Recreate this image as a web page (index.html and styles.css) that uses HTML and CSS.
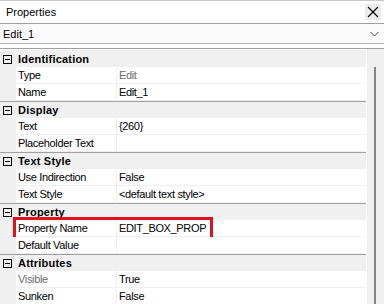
FILE: index.html
```html
<!DOCTYPE html>
<html lang="en">
<head>
<meta charset="UTF-8">
<title>Properties</title>
<link rel="stylesheet" href="styles.css">
</head>
<body>
<div class="panel">
  <div class="titlebar">
    <span class="title">Properties</span>
    <span class="close">
      <svg width="12" height="12" viewBox="0 0 12 12"><path d="M1 1L11 11M11 1L1 11" stroke="#000" stroke-width="1.1" fill="none"/></svg>
    </span>
  </div>

  <div class="combo">
    <span>Edit_1</span>
    <svg class="chevron" width="9" height="6" viewBox="0 0 9 6"><path d="M0.5 1L4.5 5L8.5 1" stroke="#555" stroke-width="1" fill="none"/></svg>
  </div>

  <div class="body">
    <div class="grid">
      <div class="cat first"><span class="toggle"></span>Identification</div>
      <div class="prop"><span class="name">Type</span><span class="value dim">Edit</span></div>
      <div class="prop"><span class="name">Name</span><span class="value">Edit_1</span></div>

      <div class="cat"><span class="toggle"></span>Display</div>
      <div class="prop"><span class="name">Text</span><span class="value">{260}</span></div>
      <div class="prop"><span class="name">Placeholder Text</span><span class="value"></span></div>

      <div class="cat"><span class="toggle"></span>Text Style</div>
      <div class="prop"><span class="name">Use Indirection</span><span class="value">False</span></div>
      <div class="prop"><span class="name">Text Style</span><span class="value">&lt;default text style&gt;</span></div>

      <div class="cat"><span class="toggle"></span>Property</div>
      <div class="prop marked"><span class="name">Property Name</span><span class="value">EDIT_BOX_PROP</span><span class="highlight"></span></div>
      <div class="prop"><span class="name">Default Value</span><span class="value"></span></div>

      <div class="cat"><span class="toggle"></span>Attributes</div>
      <div class="prop"><span class="name dim">Visible</span><span class="value">True</span></div>
      <div class="prop"><span class="name">Sunken</span><span class="value">False</span></div>
    </div>
    <div class="scrollbar"><div class="thumb"></div></div>
  </div>
</div>
</body>
</html>
```

FILE: styles.css
```css
body {
  margin: 0;
  background: #fff;
  color: #000;
  font-family: 'Liberation Sans', Arial, sans-serif;
  font-size: 11px;
  overflow: hidden;
}

.panel {
  width: 384px;
  height: 304px;
  display: flex;
  flex-direction: column;
  overflow: hidden;
}

.titlebar {
  height: 22px;
  border-top: 1px solid #c8c8c8;
  border-bottom: 1px solid #a0a0a0;
  display: flex;
  align-items: center;
  justify-content: space-between;
  padding-left: 6px;
}

.close {
  width: 16px;
  height: 16px;
  margin-right: 3px;
  background: #ececec;
  display: flex;
  align-items: center;
  justify-content: center;
}

.combo {
  height: 19px;
  background: #fbfbfb;
  border-bottom: 1px solid #b4b4b4;
  display: flex;
  align-items: center;
  justify-content: space-between;
  padding-left: 3px;
  padding-right: 5px;
}

.chevron {
  margin-top: 1px;
}

.body {
  margin-top: 4px;
  border-top: 1px solid #a0a0a0;
  flex: 1;
  display: flex;
  min-height: 0;
}

.grid {
  width: 366px;
  padding-top: 1px;
  border-right: 1px solid #fff;
}

.cat {
  height: 16px;
  border-top: 1px solid #a0a0a0;
  background: #f0f0f0;
  display: flex;
  align-items: center;
  font-weight: bold;
  letter-spacing: 0.2px;
}

.cat.first {
  border-top-color: #f0f0f0;
}

.toggle {
  width: 9px;
  height: 9px;
  box-sizing: border-box;
  border: 1px solid #000;
  margin: 0 6px 0 3px;
  position: relative;
}

.toggle::after {
  content: "";
  position: absolute;
  left: 1px;
  right: 1px;
  top: 3px;
  height: 1px;
  background: #000;
}

.prop {
  height: 16px;
  border-bottom: 1px solid #f0f0f0;
  display: flex;
  padding-left: 16px;
  background: #f0f0f0;
  position: relative;
  letter-spacing: -0.35px;
  line-height: 16px;
}

.name {
  width: 98px;
  padding-left: 2px;
  background: #fff;
  border-right: 1px solid #f0f0f0;
  white-space: nowrap;
}

.value {
  flex: 1;
  padding-left: 2px;
  background: #fff;
  white-space: nowrap;
}

.dim {
  color: #6d6d6d;
}

.highlight {
  position: absolute;
  left: 13px;
  top: -3px;
  width: 200px;
  height: 23px;
  box-sizing: border-box;
  border: 3px solid #e3101e;
}

.scrollbar {
  flex: 1;
  background: #f0f0f0;
  position: relative;
}

.thumb {
  position: absolute;
  left: 7px;
  top: 18px;
  bottom: 0;
  width: 2px;
  background: #858585;
}
```
